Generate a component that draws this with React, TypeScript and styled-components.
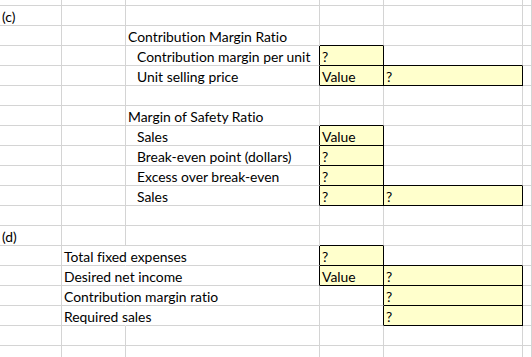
import React from 'react';
import styled, { createGlobalStyle } from 'styled-components';

const GlobalStyle = createGlobalStyle`
  html, body {
    margin: 0;
    padding: 0;
    background: #ffffff;
    overflow: hidden;
  }
  body {
    font-family: Lato, "Liberation Sans", sans-serif;
    font-variant-ligatures: none;
    color: #000000;
  }
`;

const GRID = '#d4d4d4';
const BLACK = '#000000';
const FILL = '#ffffcc';

const COL_WIDTHS = [62, 64, 194, 64, 139, 0];

type Cell = { text?: string; indent?: boolean; boxed?: boolean; spill?: boolean };

const Sheet = styled.div`
  display: flex;
  flex-direction: column;
  width: 532px;
  height: 357px;
  overflow: hidden;
`;

const Row = styled.div<{ $height: number }>`
  display: flex;
  height: ${({ $height }) => $height}px;
  flex: none;
`;

const CellBox = styled.div<{
  $width: number;
  $right: string;
  $bottom: string;
  $fill: boolean;
  $indent: boolean;
}>`
  box-sizing: border-box;
  flex: ${({ $width }) => ($width ? `0 0 ${$width}px` : '1 1 auto')};
  min-width: 0;
  height: 100%;
  border-right: 1px solid ${({ $right }) => $right};
  border-bottom: 1px solid ${({ $bottom }) => $bottom};
  background: ${({ $fill }) => ($fill ? FILL : 'transparent')};
  padding-left: ${({ $indent }) => ($indent ? 11 : 2)}px;
  padding-top: 1px;
  font-size: 13.9px;
  line-height: 19px;
  white-space: nowrap;
  overflow: visible;
`;

const empty = (): Cell[] => [{}, {}, {}, {}, {}, {}];

const row = (cells: Record<number, Cell>): Cell[] => {
  const r = empty();
  Object.entries(cells).forEach(([k, v]) => {
    r[Number(k)] = v;
  });
  return r;
};

const ROWS: Cell[][] = [
  empty(),
  row({ 0: { text: '(c)' } }),
  row({ 2: { text: 'Contribution Margin Ratio' } }),
  row({ 2: { text: 'Contribution margin per unit', indent: true }, 3: { text: '?', boxed: true } }),
  row({
    2: { text: 'Unit selling price', indent: true },
    3: { text: 'Value', boxed: true },
    4: { text: '?', boxed: true },
  }),
  empty(),
  row({ 2: { text: 'Margin of Safety Ratio' } }),
  row({ 2: { text: 'Sales', indent: true }, 3: { text: 'Value', boxed: true } }),
  row({ 2: { text: 'Break-even point (dollars)', indent: true }, 3: { text: '?', boxed: true } }),
  row({ 2: { text: 'Excess over break-even', indent: true }, 3: { text: '?', boxed: true } }),
  row({
    2: { text: 'Sales', indent: true },
    3: { text: '?', boxed: true },
    4: { text: '?', boxed: true },
  }),
  empty(),
  row({ 0: { text: '(d)' } }),
  row({ 1: { text: 'Total fixed expenses', spill: true }, 3: { text: '?', boxed: true } }),
  row({
    1: { text: 'Desired net income', spill: true },
    3: { text: 'Value', boxed: true },
    4: { text: '?', boxed: true },
  }),
  row({ 1: { text: 'Contribution margin ratio', spill: true }, 4: { text: '?', boxed: true } }),
  row({ 1: { text: 'Required sales', spill: true }, 4: { text: '?', boxed: true } }),
  empty(),
  empty(),
];

const rowHeight = (r: number) => (r === 0 ? 6 : 20);

const isBoxed = (r: number, c: number) => !!ROWS[r]?.[c]?.boxed;

const App: React.FC = () => (
  <>
    <GlobalStyle />
    <Sheet>
      {ROWS.map((cells, r) => (
        <Row key={r} $height={rowHeight(r)}>
          {cells.map((cell, c) => {
            const right = isBoxed(r, c) || isBoxed(r, c + 1) ? BLACK : cell.spill ? '#ffffff' : GRID;
            const bottom = isBoxed(r, c) || isBoxed(r + 1, c) ? BLACK : GRID;
            return (
              <CellBox
                key={c}
                $width={COL_WIDTHS[c]}
                $right={right}
                $bottom={bottom}
                $fill={!!cell.boxed}
                $indent={!!cell.indent}
              >
                {cell.text}
              </CellBox>
            );
          })}
        </Row>
      ))}
    </Sheet>
  </>
);

export default App;
